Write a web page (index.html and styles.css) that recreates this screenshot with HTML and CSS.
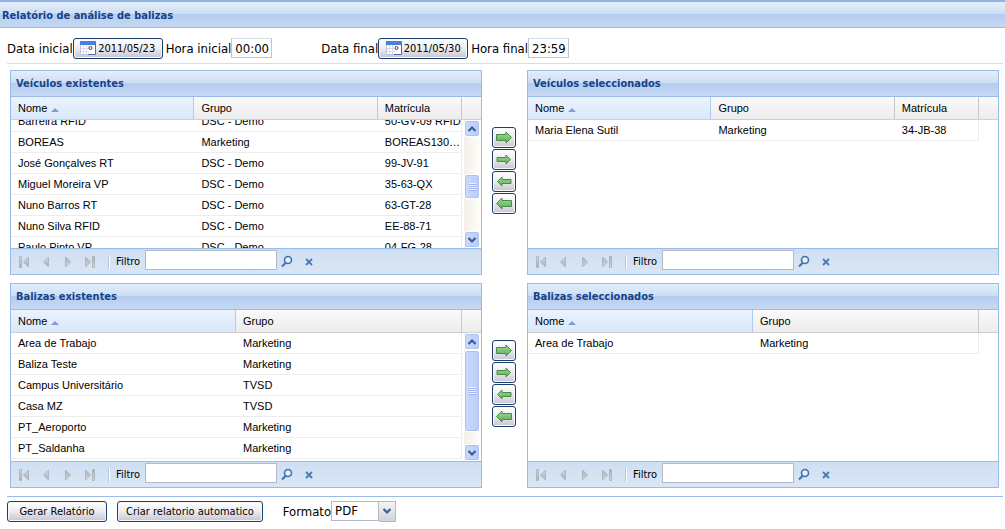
FILE: index.html
```html
<!DOCTYPE html>
<html lang="pt">
<head>
<meta charset="utf-8">
<title>Relatório de análise de balizas</title>
<link rel="stylesheet" href="styles.css">
</head>
<body>
<svg class="defs" aria-hidden="true">
  <defs>
    <linearGradient id="green" x1="0" y1="0" x2="0" y2="1"><stop offset="0" stop-color="#a5d99b"/><stop offset="1" stop-color="#58ad50"/></linearGradient>
    <linearGradient id="grey" x1="0" y1="0" x2="0" y2="1"><stop offset="0" stop-color="#d9dde2"/><stop offset="1" stop-color="#a2a9b1"/></linearGradient>
    <symbol id="all" viewBox="0 0 16 16"><path d="M.5 4.5H10V2L15.5 7.5L10 13V10.5H.5Z" fill="url(#green)" stroke="#4b8a47"/></symbol>
    <symbol id="one" viewBox="0 0 16 16"><path d="M1 5.500H10V3L14.500 7.500L10 12V9.500H1Z" fill="url(#green)" stroke="#4b8a47"/></symbol>
    <symbol id="cal" viewBox="0 0 16 14"><path d="M.5 .5H15.500V13.500H.5Z" fill="#fff" stroke="#b9c6e0"/><path d="M0 0H16V4H0Z" fill="#4a7fe0"/><path d="M15.500 3V13.500H8" fill="none" stroke="#5b6c9c"/><path d="M1 7.500H9M1 10.500H9M3.500 4V13M6.500 4V13" stroke="#d8dce8"/><circle cx="10.500" cy="7" r="1.500" fill="#fff" stroke="#6b2a20"/></symbol>
    <symbol id="first" viewBox="0 0 16 16"><path d="M3.500 2.500H5.500V13.500H3.500ZM12.500 3V13L7.500 8Z" fill="url(#grey)" stroke="#b0b7bf"/></symbol>
    <symbol id="prev" viewBox="0 0 16 16"><path d="M10.500 3V13L5.500 8Z" fill="url(#grey)" stroke="#b0b7bf"/></symbol>
    <symbol id="find" viewBox="0 0 16 16"><circle cx="9" cy="6" r="3.500" fill="#e4f0fc" stroke="#3f6fae" stroke-width="1.600"/><path d="M6.500 9L3 12.500" stroke="#3f6fae" stroke-width="2"/></symbol>
    <symbol id="clear" viewBox="0 0 16 16"><path d="M5 5L11 11M11 5L5 11" stroke="#4a7ab5" stroke-width="1.800"/></symbol>
    <symbol id="chev" viewBox="0 0 10 8"><path d="M1.500 2L5 5.500L8.500 2" fill="none" stroke="#3e5d91" stroke-width="2.200"/></symbol>
  </defs>
</svg>
<h1 class="page-title">Relatório de análise de balizas</h1>
<main>
  <div class="dates">
    <div class="period">
      <label for="d1">Data inicial</label>
      <button class="btn date" id="d1"><svg><use href="#cal"/></svg>2011/05/23</button>
      <label class="hour" for="h1">Hora inicial</label>
      <input class="time" id="h1" value="00:00">
    </div>
    <div class="period">
      <label for="d2">Data final</label>
      <button class="btn date" id="d2"><svg><use href="#cal"/></svg>2011/05/30</button>
      <label class="hour" for="h2">Hora final</label>
      <input class="time" id="h2" value="23:59">
    </div>
  </div>
  <div class="pickers" id="pickers"></div>
  <div class="actions">
    <button class="btn">Gerar Relatório</button>
    <button class="btn">Criar relatorio automatico</button>
    <label for="fmt">Formato</label>
    <div class="combo"><select id="fmt"><option>PDF</option></select><span class="trigger"><svg><use href="#chev"/></svg></span></div>
  </div>
</main>
<script src="app.js"></script>
</body>
</html>
```
FILE: styles.css
```css
* { box-sizing: border-box; }
body { margin: 0; background: #fff; color: #000; font: 11px "Liberation Sans", Arial, sans-serif; }
button, input, select { font: inherit; color: inherit; margin: 0; padding: 0; border-radius: 0; }
.defs { position: absolute; width: 0; height: 0; }
.page-title, .panel h2 {
  margin: 0; color: #15428b; font: bold 11px "DejaVu Sans Condensed", Tahoma, sans-serif;
  background: linear-gradient(#e3eefb, #cbddf3 50%, #b5cdee 50%, #c5d9f3);
  border-bottom: 1px solid #99bbe8;
}
.page-title { height: 28px; line-height: 28px; padding-left: 2px; border-top: 2px solid #8db2e3; }
main { padding: 0 2px 0 7px; }
.dates { display: flex; height: 36px; padding-top: 9px; border-bottom: 1px solid #d5dfe8; gap: 49px; }
.period, .actions { display: flex; align-items: center; font: 13px "DejaVu Sans Condensed", Tahoma, sans-serif; }
.period { height: 22px; }
.btn {
  display: flex; align-items: center; justify-content: center; height: 21px; padding: 0 8px;
  border: 1px solid #1b3f6b; border-radius: 3px; font: 11px "DejaVu Sans Condensed", Tahoma, sans-serif;
  background: linear-gradient(#fff, #ecebee 50%, #c6c5d3); box-shadow: inset 0 0 0 1px #f7f8fa; white-space: nowrap;
}
.date { width: 90px; padding: 0; gap: 2px; }
.date svg { width: 16px; height: 14px; }
.hour { margin-left: 3px; }
.time { width: 41px; height: 20px; padding-left: 3px; border: 1px solid #b5c8d8; border-top-color: #d5dfe8; }
.pickers { display: grid; grid-template-columns: 1fr 45px 1fr; row-gap: 8px; padding: 6px 4px 8px 3px; }
.panel { border: 1px solid #99bbe8; min-width: 0; }
.panel h2 { height: 26px; line-height: 26px; padding-left: 5px; }
.head { height: 23px; padding-right: 19px; background: linear-gradient(#fafafa, #ececec); border-bottom: 1px solid #d0d0d0; }
table { width: 100%; table-layout: fixed; border-collapse: separate; border-spacing: 0; }
th, td { text-align: left; font-weight: normal; padding: 0 0 0 7px; white-space: nowrap; overflow: hidden; text-overflow: ellipsis; }
th { height: 22px; border-right: 1px solid #c8c8c8; }
th.sorted { background: linear-gradient(#ebf3fd, #d9e8fb); border-right-color: #aaccf6; }
th.sorted::after { content: ""; display: inline-block; margin-left: 4px; border: 4px solid transparent; border-top: 0; border-bottom: 4px solid #7ba0cf; }
td { height: 21px; border-bottom: 1px solid #ededed; }
td:last-child { border-right: 1px solid #ededed; }
.body { display: flex; gap: 2px; height: 128px; }
.rows { flex: 1; overflow: hidden; }
.bar { display: flex; flex-direction: column; width: 17px; background: linear-gradient(90deg, #f3f0e8, #fefefb); }
.no-bar { visibility: hidden; }
.bar button, .thumb { flex: none; display: grid; place-items: center; width: 16px; border: 1px solid #fff; border-radius: 3px; background: linear-gradient(90deg, #ccdafd, #b9cbf9); box-shadow: inset 0 0 0 1px #b0c3ef; }
.bar button { height: 17px; }
.bar svg, .trigger svg { width: 10px; height: 8px; }
.up svg, .flip { transform: rotate(180deg); }
.move .flip { transform: scaleX(-1); }
.before.mid { flex: 37; }
.after.mid { flex: 32; }
.after.top { flex: 1; }
.thumb.mid { height: 25px; }
.thumb.top { height: 82px; }
.thumb i { width: 7px; height: 8px; background: repeating-linear-gradient(#eef4fe 0 1px, #9db3ea 1px 2px); }
.foot { display: flex; align-items: center; height: 26px; border-top: 1px solid #99bbe8; background: linear-gradient(#cfdff2, #d9e6f5); }
.icon { display: block; width: 16px; height: 16px; border: 0; background: none; }
.icon svg, .move svg { display: block; width: 16px; height: 16px; }
.pages { display: flex; gap: 6px; padding: 0 2px 0 5px; }
.sep { width: 2px; height: 14px; margin: 0 6px 0 8px; border-left: 1px solid #b0c8e4; border-right: 1px solid #fff; }
.foot label { font: 11px "DejaVu Sans Condensed", Tahoma, sans-serif; }
.foot input { width: 132px; height: 20px; margin: 0 2px 3px 5px; border: 1px solid #b5b8c8; background: #fff; }
.find { margin-right: 6px; }
.moves { display: flex; flex-direction: column; align-items: center; gap: 1px; padding: 57px 1px 0 0; }
.move { width: 24px; height: 21px; padding: 0; }
.actions { height: 33px; padding-bottom: 4px; border-top: 1px solid #99bbe8; gap: 10px; }
.actions .btn { min-width: 100px; }
.actions label { margin-left: 10px; }
.combo { display: flex; margin-left: -10px; height: 21px; }
select { appearance: none; width: 48px; height: 20px; padding-left: 3px; border: 1px solid #b5b8c8; background: #fff; }
.trigger { display: grid; place-items: center; width: 17px; border: 1px solid #b5b8c8; border-left: 0; background: linear-gradient(#f4f5f8, #cfd3dc); }
```
FILE: app.js
```js
const vehicles = [
  ["Barreira RFID", "DSC - Demo", "50-GV-09 RFID"],
  ["BOREAS", "Marketing", "BOREAS130-XL"],
  ["José Gonçalves RT", "DSC - Demo", "99-JV-91"],
  ["Miguel Moreira VP", "DSC - Demo", "35-63-QX"],
  ["Nuno Barros RT", "DSC - Demo", "63-GT-28"],
  ["Nuno Silva RFID", "DSC - Demo", "EE-88-71"],
  ["Paulo Pinto VP", "DSC - Demo", "04-FG-28"],
  ["", "", ""]
];
const beacons = [
  ["Area de Trabajo", "Marketing"],
  ["Baliza Teste", "Marketing"],
  ["Campus Universitário", "TVSD"],
  ["Casa MZ", "TVSD"],
  ["PT_Aeroporto", "Marketing"],
  ["PT_Saldanha", "Marketing"]
];
const vehicleCols = [["Nome", 183], ["Grupo", 183], ["Matrícula", 84]];
const beaconCols = [["Nome", 225], ["Grupo", 226]];
const icon = (id, cls = "") => `<svg class="${cls}"><use href="#${id}"/></svg>`;

function panel(id, title, cols, rows, bar) {
  const total = cols.reduce((sum, c) => sum + c[1], 0);
  const group = "<colgroup>" + cols.map(c => `<col style="width:${c[1] / total * 100}%">`).join("") + "</colgroup>";
  const head = cols.map((c, i) => `<th${i ? "" : ' class="sorted"'}>${c[0]}</th>`).join("");
  const body = rows.map(r => "<tr>" + r.map(v => `<td>${v}</td>`).join("") + "</tr>").join("");
  const scroll = bar ? `<div class="bar"><button class="up" aria-label="Subir">${icon("chev")}</button><div class="before ${bar}"></div><div class="thumb ${bar}"><i></i></div><div class="after ${bar}"></div><button aria-label="Descer">${icon("chev")}</button></div>` : `<div class="bar no-bar"></div>`;
  const page = (name, label, flip) => `<button class="icon" aria-label="${label}">${icon(name, flip)}</button>`;
  return `<section class="panel"><h2>${title}</h2>
    <div class="head"><table>${group}<tr>${head}</tr></table></div>
    <div class="body"><div class="rows ${bar}"><table>${group}${body}</table></div>${scroll}</div>
    <div class="foot"><div class="pages">${page("first", "Primeira", "")}${page("prev", "Anterior", "")}${page("prev", "Seguinte", "flip")}${page("first", "Última", "flip")}</div>
    <span class="sep"></span><label for="${id}">Filtro</label><input id="${id}"><button class="icon find" aria-label="Procurar">${icon("find")}</button><button class="icon" aria-label="Limpar">${icon("clear")}</button></div></section>`;
}
const moves = `<div class="moves">` + [["all", "", "Adicionar todos"], ["one", "", "Adicionar"], ["one", "flip", "Remover"], ["all", "flip", "Remover todos"]]
  .map(m => `<button class="btn move" aria-label="${m[2]}">${icon(m[0], m[1])}</button>`).join("") + "</div>";

document.getElementById("pickers").innerHTML =
  panel("f1", "Veículos existentes", vehicleCols, vehicles, "mid") + moves +
  panel("f2", "Veículos seleccionados", vehicleCols, [["Maria Elena Sutil", "Marketing", "34-JB-38"]], "") +
  panel("f3", "Balizas existentes", beaconCols, beacons, "top") + moves +
  panel("f4", "Balizas seleccionados", beaconCols, [["Area de Trabajo", "Marketing"]], "");
document.querySelector(".rows.mid").scrollTop = 9;
```
